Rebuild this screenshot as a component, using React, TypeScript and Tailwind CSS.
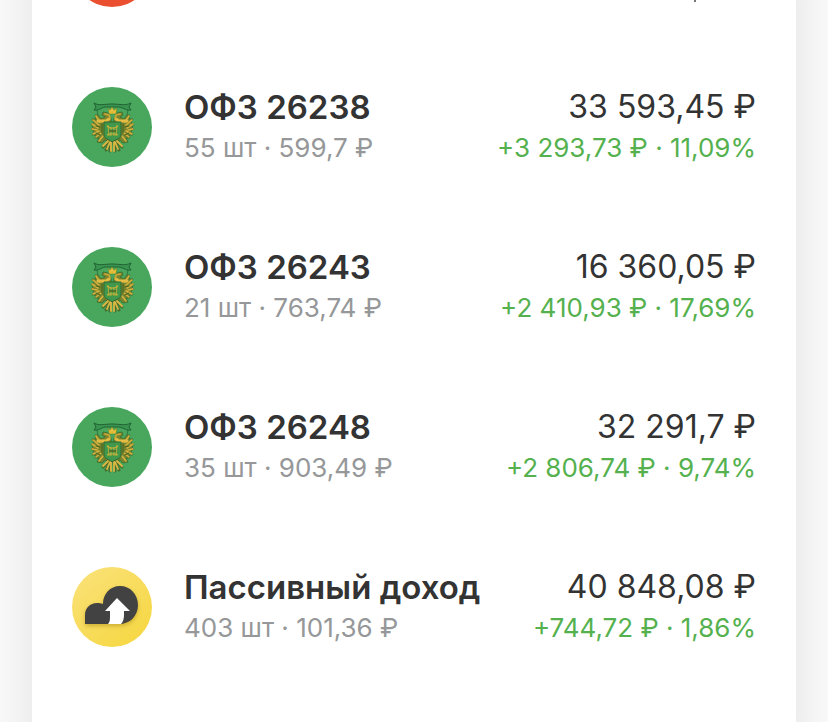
import React from 'react';

type Holding = {
  name: string;
  position: string;
  value: string;
  profit: string;
  icon: 'bond' | 'fund';
};

const HOLDINGS: Holding[] = [
  { name: 'ОФЗ 26238', position: '55 шт · 599,7 ₽', value: '33 593,45 ₽', profit: '+3 293,73 ₽ · 11,09%', icon: 'bond' },
  { name: 'ОФЗ 26243', position: '21 шт · 763,74 ₽', value: '16 360,05 ₽', profit: '+2 410,93 ₽ · 17,69%', icon: 'bond' },
  { name: 'ОФЗ 26248', position: '35 шт · 903,49 ₽', value: '32 291,7 ₽', profit: '+2 806,74 ₽ · 9,74%', icon: 'bond' },
  { name: 'Пассивный доход', position: '403 шт · 101,36 ₽', value: '40 848,08 ₽', profit: '+744,72 ₽ · 1,86%', icon: 'fund' },
];

// One half of the eagle, mirrored for the other side
function EagleHalf() {
  return (
    <g strokeLinecap="round" strokeLinejoin="round">
      <path
        d="M39 31 L36 26 L31 25 L30 28 L33 30 L29 32 L26 28 L23 28 L24 32 L20 32 L22 36 L19 37 L21 40 L19 42 L22 44 L20 48 L24 48 L23 51 L27 51 L25 55 L30 56 L33 53 L39 55 Z"
        fill="#78852f"
        stroke="#3a6a30"
        strokeWidth="0.8"
      />
      <path
        d="M24 29 L28 35 M21 33 L27 38 M20 37 L26 41 M20 42 L25 43 M21 47 L27 44 M24 50 L29 46 M27 54 L31 49"
        stroke="#d6b13d"
        strokeWidth="1.6"
        fill="none"
      />
      <path d="M26 34 L34 34 L37 32" stroke="#e3bd45" strokeWidth="3" fill="none" />
      <path d="M33 27 L37 28 L38 31" stroke="#cbaa3a" strokeWidth="1.8" fill="none" />
      <path d="M30 37 L30 46 M24 39 L28 40 M24 46 L28 48" stroke="#42611f" strokeWidth="1" fill="none" />
      <path d="M39 55 L38 64 M38 55 L34 63 M36 54 L31 60" stroke="#47702f" strokeWidth="3" fill="none" />
      <path d="M39 55 L39 64 M38 55 L35 62 M36 54 L31 59" stroke="#dfb944" strokeWidth="1.8" fill="none" />
    </g>
  );
}

function BondIcon() {
  return (
    <svg viewBox="0 0 80 80" className="size-20 shrink-0" aria-hidden="true">
      <circle cx="40" cy="40" r="40" fill="#48a75d" />
      <path
        d="M22 16 C27 19 32 17 40 17 C48 17 53 19 59 16 L57 20 L59 23 C55 24 52 21 47 20 L33 20 C29 21 26 24 22 23 L24 20 Z"
        fill="#399450"
        stroke="#1f5a31"
        strokeWidth="0.9"
        strokeLinejoin="round"
      />
      <path d="M25 23 L26 28 M56 23 L55 28" stroke="#2b6b37" strokeWidth="0.8" />
      <EagleHalf />
      <g transform="translate(81 0) scale(-1 1)">
        <EagleHalf />
      </g>
      <path d="M36 21 L38 23 L40 20 L42 23 L45 21 L44 27 L37 27 Z" fill="#e2bd3d" stroke="#54801f" strokeWidth="0.5" />
      <path d="M32 35 H49 V48 C49 52 44 52 40 55 C37 52 32 52 32 48 Z" fill="#3f984b" stroke="#2f6a30" strokeWidth="1" />
      <path d="M36 38 L37 49 M45 38 L44 49 M39 40 V49 M42 40 V49" stroke="#b9aa38" strokeWidth="1" />
      <path d="M35 39 L38 41 H43 L46 39 M35 48 L38 47 H43 L46 48" stroke="#d0b53a" strokeWidth="1.1" fill="none" />
      <path d="M37 44 H44" stroke="#4b6b28" strokeWidth="1.6" />
    </svg>
  );
}

function FundIcon() {
  return (
    <svg viewBox="0 0 80 80" className="size-20 shrink-0" aria-hidden="true">
      <defs>
        <linearGradient id="fund-bg" x1="0" y1="0" x2="0.8" y2="1">
          <stop offset="0" stopColor="#fae27b" />
          <stop offset="1" stopColor="#f6d743" />
        </linearGradient>
        <filter id="fund-shadow" x="-20%" y="-20%" width="140%" height="150%">
          <feDropShadow dx="0" dy="2" stdDeviation="2" floodColor="#8a6a10" floodOpacity="0.4" />
        </filter>
      </defs>
      <circle cx="40" cy="40" r="40" fill="url(#fund-bg)" />
      <path
        d="M13 57 V48 C13 41 18 36 25 36 C27 36 29 36 31 37 C31 27 38 19 48 19 C58 19 66 27 66 38 C66 49 58 57 47 57 Z"
        fill="#424242"
        filter="url(#fund-shadow)"
      />
      <path d="M45 31 L58 44 H52 V48 C52 52 51 55 49 57 H36 C38 55 38 52 38 49 V44 H33 Z" fill="#fff" />
    </svg>
  );
}

function HoldingRow({ holding }: { holding: Holding }) {
  return (
    <li className="flex h-40 items-center justify-between gap-4">
      <div className="flex items-center gap-8">
        {holding.icon === 'bond' ? <BondIcon /> : <FundIcon />}
        <div>
          <h2 className="text-[33px] leading-[42px] font-semibold text-[#333]">{holding.name}</h2>
          <p className="text-[26px] leading-10 text-[#959799]">{holding.position}</p>
        </div>
      </div>
      <div className="text-right whitespace-nowrap">
        <p className="text-[32px] leading-[42px] text-[#333]">{holding.value}</p>
        <p className="text-[26px] leading-10 text-[#54b14e]">{holding.profit}</p>
      </div>
    </li>
  );
}

export default function App() {
  return (
    <div className="min-h-screen overflow-hidden bg-[#fafafa] px-8 font-['Inter','Liberation_Sans',sans-serif]">
      {/* The card runs past both edges so its shadow stays even */}
      <main className="-my-12 min-h-[calc(100vh+96px)] bg-white px-10 py-12 shadow-[0_0_48px_rgba(0,0,0,0.1)]">
        {/* Tail of the row scrolled past the top edge */}
        <div className="flex h-[7px] items-end justify-between overflow-hidden">
          <div className="size-20 shrink-0 rounded-full bg-[#ea5030]" />
          <div className="mr-15 h-0.5 w-0.5 self-start bg-[#777]" />
        </div>
        <ul className="pt-10">
          {HOLDINGS.map((holding) => (
            <HoldingRow key={holding.name} holding={holding} />
          ))}
        </ul>
      </main>
    </div>
  );
}
